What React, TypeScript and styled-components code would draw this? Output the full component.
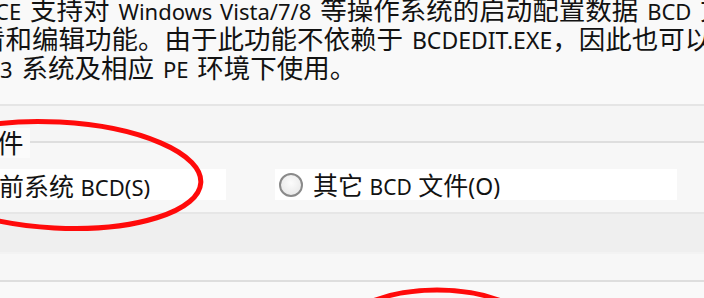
import React from "react";
import styled, { createGlobalStyle } from "styled-components";

const Global = createGlobalStyle`
  html, body { margin: 0; padding: 0; background: #f9f9f9; overflow: hidden; }
  #root { width: 704px; height: 298px; }
`;

const FONT = `"Noto Sans", "Noto Sans CJK SC", sans-serif`;

const Page = styled.div`
  position: relative;
  width: 704px;
  height: 298px;
  overflow: hidden;
  background: #f9f9f9;
  font-family: ${FONT};
  color: #121212;
  display: flex;
  flex-direction: column;
`;

const Description = styled.div`
  flex: none;
  height: 108px;
  margin-top: -4px;
  display: flex;
  flex-direction: column;
  font-size: 26.5px;
  word-spacing: 2px;
`;

const Line = styled.div<{ $indent: number }>`
  height: 29px;
  line-height: 29px;
  white-space: nowrap;
  text-indent: ${(p) => p.$indent}px;
`;

const Latin = styled.span<{ $size?: number }>`
  font-size: ${(p) => p.$size ?? 22}px;
`;

const Band = styled.div<{ $h: number; $bg: string; $line: string; $grow?: boolean }>`
  flex: ${(p) => (p.$grow ? "1 1 auto" : "none")};
  height: ${(p) => p.$h}px;
  background: ${(p) => p.$bg};
  border-top: 2px solid ${(p) => p.$line};
`;

const Group = styled.div`
  flex: none;
  height: 69px;
  background: #f7f7f7;
  position: relative;
  border-top: 2px solid #dedede;
  display: flex;
  flex-direction: column;
`;

const Legend = styled.div`
  position: absolute;
  top: -15px;
  left: 0;
  padding: 0 6px 0 0;
  background: #fbfbfb;
  font-size: 26.5px;
  line-height: 30px;
  white-space: nowrap;
  text-indent: -3px;
`;

const OptionRow = styled.div`
  margin-top: 26px;
  display: flex;
  align-items: center;
  height: 31px;
`;

const Option = styled.label<{ $left: number; $width: number }>`
  margin-left: ${(p) => p.$left}px;
  width: ${(p) => p.$width}px;
  height: 31px;
  padding-left: 4px;
  box-sizing: border-box;
  background: #ffffff;
  display: flex;
  align-items: center;
  gap: 10px;
  white-space: nowrap;
  flex: none;
  font-size: 25px;
`;

const Radio = styled.span`
  width: 24px;
  height: 24px;
  box-sizing: border-box;
  border-radius: 50%;
  border: 2px solid #8a8a8a;
  background: radial-gradient(circle at 50% 40%, #fcfcfc, #e4e4e4);
  flex: none;
`;

const OptionText = styled.span`
  line-height: 31px;
  padding-top: 4px;
`;

const Overlay = styled.svg`
  position: absolute;
  left: 0;
  top: 0;
  pointer-events: none;
`;

export default function App() {
  return (
    <>
      <Global />
      <Page>
        <Description>
          <Line $indent={-5}>
            <Latin>CE</Latin> 支持对 <Latin>Windows Vista/7/8</Latin> 等操作系统的启动配置数据 <Latin>BCD</Latin> 文件的查
          </Line>
          <Line $indent={-21}>
            看和编辑功能。由于此功能不依赖于 <Latin $size={23}>BCDEDIT.EXE</Latin>，因此也可以在
          </Line>
          <Line $indent={0}>
            <Latin>3</Latin> 系统及相应 <Latin>PE</Latin> 环境下使用。
          </Line>
        </Description>
        <Band $h={35} $bg="#f5f5f5" $line="#e5e5e5" />
        <Group>
          <Legend>件</Legend>
          <OptionRow>
            <Option $left={-64} $width={290}>
              <Radio />
              <OptionText>
                当前系统 <Latin $size={22}>BCD(S)</Latin>
              </OptionText>
            </Option>
            <Option $left={49} $width={402}>
              <Radio />
              <OptionText>
                其它 <Latin $size={21}>BCD</Latin> 文件<Latin $size={23}>(O)</Latin>
              </OptionText>
            </Option>
          </OptionRow>
        </Group>
        <Band $h={38} $bg="#efefef" $line="#e6e6e6" />
        <Band $h={26} $bg="#f7f7f7" $line="#f3f3f3" />
        <Band $h={14} $bg="#f9f9f9" $line="#dedede" $grow />
        <Overlay width="704" height="298" viewBox="0 0 704 298">
          <ellipse cx="57" cy="175" rx="144" ry="53" fill="none" stroke="#ff0a0a" strokeWidth="5" transform="rotate(3 57 175)" />
          <ellipse cx="437" cy="332" rx="95" ry="42" fill="none" stroke="#ff0a0a" strokeWidth="5" />
        </Overlay>
      </Page>
    </>
  );
}
